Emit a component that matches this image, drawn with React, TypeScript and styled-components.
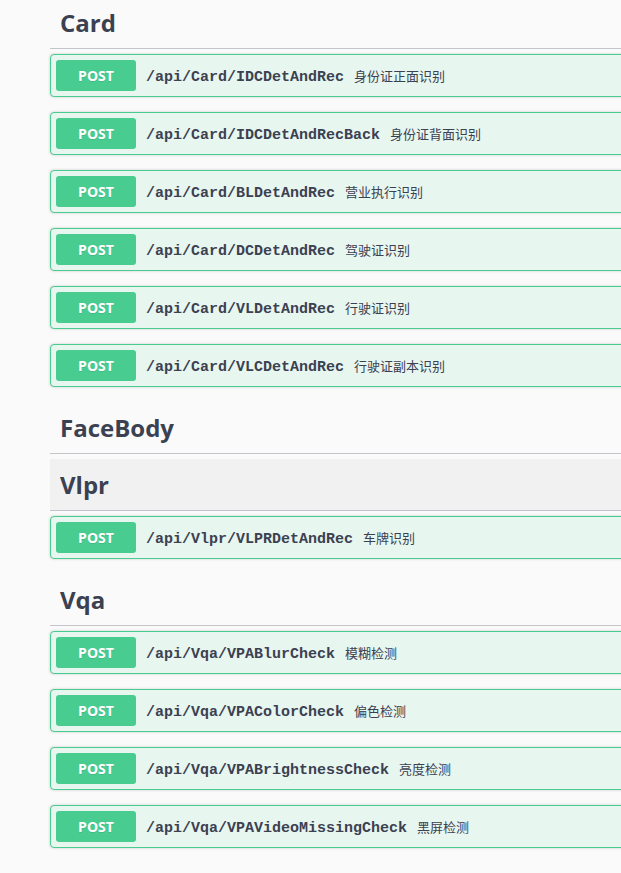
import React from "react";
import styled, { createGlobalStyle } from "styled-components";

const GlobalStyle = createGlobalStyle`
  html, body {
    margin: 0;
    padding: 0;
    background: #fafafa;
    overflow: hidden;
  }
  body {
    font-family: "Open Sans", "Noto Sans", sans-serif;
    color: #3b4151;
  }
`;

const Wrapper = styled.div`
  width: 680px;
  margin-top: -3px;
  padding-left: 50px;
  box-sizing: border-box;
`;

const Section = styled.section`
  display: flex;
  flex-direction: column;
`;

const TagHeading = styled.h3<{ $hover?: boolean }>`
  margin: 0 0 5px;
  padding: 10px 20px 10px 10px;
  line-height: 31px;
  font-size: 24px;
  font-weight: 700;
  font-family: "Open Sans", "Noto Sans", sans-serif;
  color: #3b4151;
  border-bottom: 1px solid #c3c5ca;
  background: ${(p) => (p.$hover ? "#f1f1f1" : "transparent")};
`;

const OpBlock = styled.div`
  margin: 0 0 15px;
  border: 1px solid #49cc90;
  border-radius: 4px;
  background: #e8f6f0;
  box-shadow: 0 0 3px rgba(0, 0, 0, 0.19);
`;

const Summary = styled.div`
  display: flex;
  align-items: center;
  padding: 5px;
`;

const Method = styled.span`
  display: inline-block;
  min-width: 80px;
  height: 31px;
  line-height: 31px;
  border-radius: 3px;
  background: #49cc90;
  color: #fff;
  font-family: "Open Sans", "Noto Sans", sans-serif;
  font-size: 14px;
  font-weight: 700;
  text-align: center;
  text-shadow: 0 1px 0 rgba(0, 0, 0, 0.1);
`;

const Path = styled.span`
  padding: 4px 10px 0;
  font-family: "Liberation Mono", "Courier New", monospace;
  font-size: 15px;
  font-weight: 700;
  color: #3b4151;
  white-space: nowrap;
`;

const Desc = styled.span`
  font-family: "Noto Sans CJK SC", "Noto Sans", sans-serif;
  font-size: 13px;
  color: #3b4151;
  white-space: nowrap;
`;

type Op = { path: string; desc: string };
type Tag = { name: string; hover?: boolean; ops: Op[] };

const tags: Tag[] = [
  {
    name: "Card",
    ops: [
      { path: "/api/Card/IDCDetAndRec", desc: "身份证正面识别" },
      { path: "/api/Card/IDCDetAndRecBack", desc: "身份证背面识别" },
      { path: "/api/Card/BLDetAndRec", desc: "营业执行识别" },
      { path: "/api/Card/DCDetAndRec", desc: "驾驶证识别" },
      { path: "/api/Card/VLDetAndRec", desc: "行驶证识别" },
      { path: "/api/Card/VLCDetAndRec", desc: "行驶证副本识别" },
    ],
  },
  { name: "FaceBody", ops: [] },
  {
    name: "Vlpr",
    hover: true,
    ops: [{ path: "/api/Vlpr/VLPRDetAndRec", desc: "车牌识别" }],
  },
  {
    name: "Vqa",
    ops: [
      { path: "/api/Vqa/VPABlurCheck", desc: "模糊检测" },
      { path: "/api/Vqa/VPAColorCheck", desc: "偏色检测" },
      { path: "/api/Vqa/VPABrightnessCheck", desc: "亮度检测" },
      { path: "/api/Vqa/VPAVideoMissingCheck", desc: "黑屏检测" },
    ],
  },
];

export default function App() {
  return (
    <>
      <GlobalStyle />
      <Wrapper>
        {tags.map((t) => (
          <Section key={t.name}>
            <TagHeading $hover={t.hover}>{t.name}</TagHeading>
            {t.ops.map((o) => (
              <OpBlock key={o.path}>
                <Summary>
                  <Method>POST</Method>
                  <Path>{o.path}</Path>
                  <Desc>{o.desc}</Desc>
                </Summary>
              </OpBlock>
            ))}
          </Section>
        ))}
      </Wrapper>
    </>
  );
}
